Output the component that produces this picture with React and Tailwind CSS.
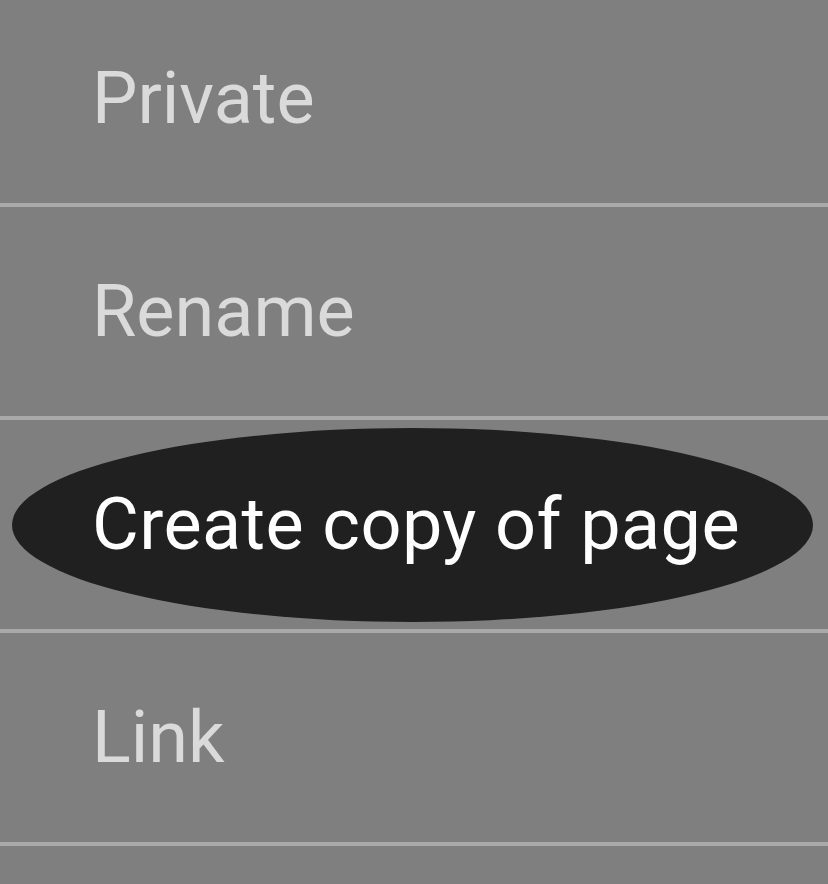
export default function App() {
  const items = ["Private", "Rename", "Create copy of page", "Link"];
  return (
    <div className="h-[884px] w-[828px] overflow-hidden bg-[#7f7f7f] font-['Roboto',sans-serif]">
      <div className="-mt-[6px]">
        {items.map((label, i) => {
          const active = i === 2;
          return (
            <div
              key={label}
              className="relative flex h-[213px] items-center border-b-4 border-[#a9a9a9] pl-[92px]"
            >
              {active && (
                <div className="absolute left-[12px] top-[8px] h-[194px] w-[801px] rounded-[50%] bg-[#202020]" />
              )}
              <span
                className={
                  active
                    ? "relative text-[72px] leading-none tracking-[0.4px] text-white"
                    : "relative text-[72px] leading-none text-[#dadada]"
                }
              >
                {label}
              </span>
            </div>
          );
        })}
      </div>
    </div>
  );
}
